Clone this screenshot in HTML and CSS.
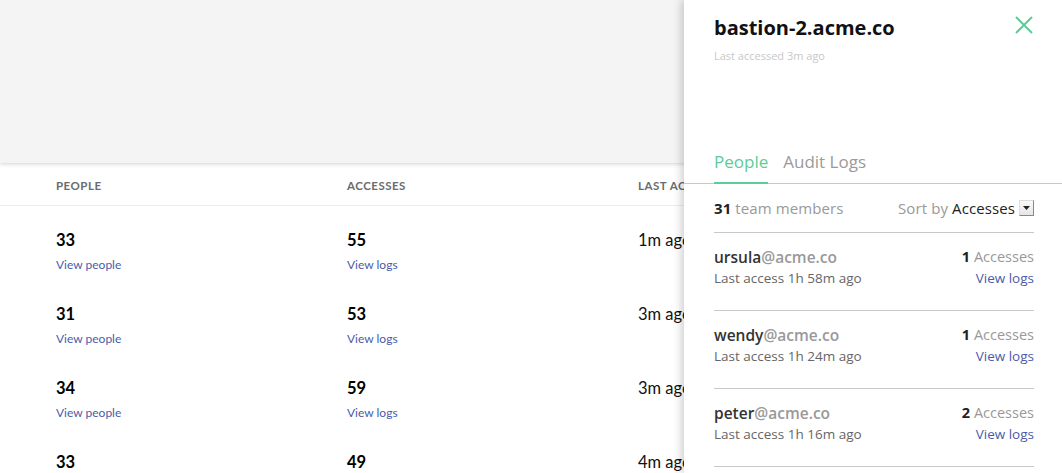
FILE: index.html
```html
<!DOCTYPE html>
<html>
<head>
<meta charset="utf-8">
<link rel="stylesheet" href="styles.css">
</head>
<body>
<div class="page">
  <div class="hero"></div>
  <div class="table">
    <div class="thead">
      <div class="col">PEOPLE</div>
      <div class="col">ACCESSES</div>
      <div class="col">LAST ACCESS</div>
    </div>
    <div class="row">
      <div class="col"><div class="num">33</div><a class="link">View people</a></div>
      <div class="col"><div class="num">55</div><a class="link">View logs</a></div>
      <div class="col"><div class="ago">1m ago</div></div>
    </div>
    <div class="row">
      <div class="col"><div class="num">31</div><a class="link">View people</a></div>
      <div class="col"><div class="num">53</div><a class="link">View logs</a></div>
      <div class="col"><div class="ago">3m ago</div></div>
    </div>
    <div class="row">
      <div class="col"><div class="num">34</div><a class="link">View people</a></div>
      <div class="col"><div class="num">59</div><a class="link">View logs</a></div>
      <div class="col"><div class="ago">3m ago</div></div>
    </div>
    <div class="row">
      <div class="col"><div class="num">33</div><a class="link">View people</a></div>
      <div class="col"><div class="num">49</div><a class="link">View logs</a></div>
      <div class="col"><div class="ago">4m ago</div></div>
    </div>
  </div>

  <aside class="drawer">
    <div class="drawer-head">
      <div>
        <h1 class="title">bastion-2.acme.co</h1>
        <div class="subtitle">Last accessed 3m ago</div>
      </div>
      <svg class="close" width="18" height="18" viewBox="0 0 18 18">
        <path d="M1 1 L17 17 M17 1 L1 17" stroke="#5dcc96" stroke-width="2" fill="none"/>
      </svg>
    </div>
    <div class="tabs">
      <div class="tab active">People</div>
      <div class="tab">Audit Logs</div>
    </div>
    <div class="summary">
      <div><b>31</b> team members</div>
      <div class="sort">Sort by <span class="dark">Accesses</span><span class="select-arrow"><svg width="7" height="4" viewBox="0 0 7 4"><path d="M0 0 H7 L3.5 4 Z" fill="#222"/></svg></span></div>
    </div>
    <div class="person">
      <div class="p-left">
        <div class="email"><span class="dark">ursula</span>@acme.co</div>
        <div class="when">Last access 1h 58m ago</div>
      </div>
      <div class="p-right">
        <div class="count"><b>1</b> Accesses</div>
        <a class="link2">View logs</a>
      </div>
    </div>
    <div class="person">
      <div class="p-left">
        <div class="email"><span class="dark">wendy</span>@acme.co</div>
        <div class="when">Last access 1h 24m ago</div>
      </div>
      <div class="p-right">
        <div class="count"><b>1</b> Accesses</div>
        <a class="link2">View logs</a>
      </div>
    </div>
    <div class="person">
      <div class="p-left">
        <div class="email"><span class="dark">peter</span>@acme.co</div>
        <div class="when">Last access 1h 16m ago</div>
      </div>
      <div class="p-right">
        <div class="count"><b>2</b> Accesses</div>
        <a class="link2">View logs</a>
      </div>
    </div>
  </aside>
</div>
</body>
</html>
```

FILE: styles.css
```css
* { box-sizing: border-box; }
html, body { margin: 0; padding: 0; }
body {
  font-family: "Lato", "Liberation Sans", sans-serif;
  background: #fff;
  color: #111;
  width: 1062px;
  height: 473px;
  overflow: hidden;
}
.page {
  position: relative;
  width: 1062px;
  height: 473px;
  overflow: hidden;
}
.hero {
  height: 163px;
  background: #f4f4f4;
  box-shadow: 0 1px 4px rgba(0,0,0,0.18);
  position: relative;
  z-index: 1;
}
.table { background: #fff; }
.thead {
  display: flex;
  height: 43px;
  align-items: center;
  padding-left: 56px;
  padding-top: 2px;
  border-bottom: 1px solid #ececec;
  font-size: 11.5px;
  font-weight: 700;
  color: #6b6b6b;
  letter-spacing: 0.5px;
}
.col { width: 291px; flex: none; }
.row {
  display: flex;
  padding-left: 56px;
  height: 74px;
  padding-top: 24px;
}
.num {
  font-size: 16.5px;
  line-height: 20px;
  font-weight: 700;
  color: #000;
}
.ago {
  font-size: 16.5px;
  line-height: 20px;
  color: #111;
}
.link {
  display: block;
  margin-top: 7px;
  font-size: 12px;
  line-height: 16px;
  color: #4a5bab;
}

.drawer {
  position: absolute;
  top: 0;
  right: 0;
  width: 378px;
  height: 473px;
  background: #fff;
  box-shadow: -3px 0 8px rgba(0,0,0,0.18);
  z-index: 2;
  font-family: "Open Sans", "Liberation Sans", sans-serif;
}
.drawer-head {
  display: flex;
  justify-content: space-between;
  padding: 16px 29px 0 30px;
  height: 151px;
}
.title {
  margin: 0;
  font-size: 20px;
  line-height: 24px;
  font-weight: 700;
  color: #111;
}
.subtitle {
  margin-top: 9px;
  font-size: 11px;
  line-height: 14px;
  color: #c8c8c8;
}
.close { margin-top: 0; }
.tabs {
  display: flex;
  gap: 15px;
  padding-left: 30px;
  border-bottom: 1px solid #c8c8c8;
}
.tab {
  font-size: 17px;
  line-height: 22px;
  padding-bottom: 10px;
  color: #9a9a9a;
}
.tab.active {
  color: #5dcc96;
  border-bottom: 2px solid #5dcc96;
  margin-bottom: -1px;
  padding-bottom: 9px;
}
.summary {
  margin: 0 28px 0 30px;
  display: flex;
  justify-content: space-between;
  align-items: center;
  height: 49px;
  border-bottom: 1px solid #c8c8c8;
  font-size: 15px;
  letter-spacing: 0.1px;
  color: #999;
}
.summary b { color: #222; }
.dark { color: #222; }
.sort { display: flex; align-items: center; }
.sort .dark { margin-left: 4px; }
.select-arrow {
  display: inline-flex;
  align-items: center;
  justify-content: center;
  width: 15px;
  height: 16px;
  margin-left: 4px;
  background: linear-gradient(#fafafa, #e6e6e6);
  border-right: 1px solid #888;
  border-bottom: 1px solid #888;
  border-left: 1px solid #ddd;
  border-top: 1px solid #ddd;
}
.person {
  margin: 0 28px 0 30px;
  height: 78px;
  border-bottom: 1px solid #c8c8c8;
  display: flex;
  justify-content: space-between;
  padding-top: 14px;
}
.email {
  font-size: 15.5px;
  line-height: 20px;
  color: #999;
  font-weight: 600;
}
.email .dark { color: #333; }
.when {
  margin-top: 2px;
  font-size: 13.5px;
  line-height: 18px;
  color: #666;
}
.p-right { text-align: right; }
.count {
  font-size: 14.5px;
  line-height: 20px;
  color: #999;
}
.count b { color: #222; }
.link2 {
  display: block;
  margin-top: 2px;
  font-size: 13.5px;
  line-height: 18px;
  color: #4a5bab;
}
```
